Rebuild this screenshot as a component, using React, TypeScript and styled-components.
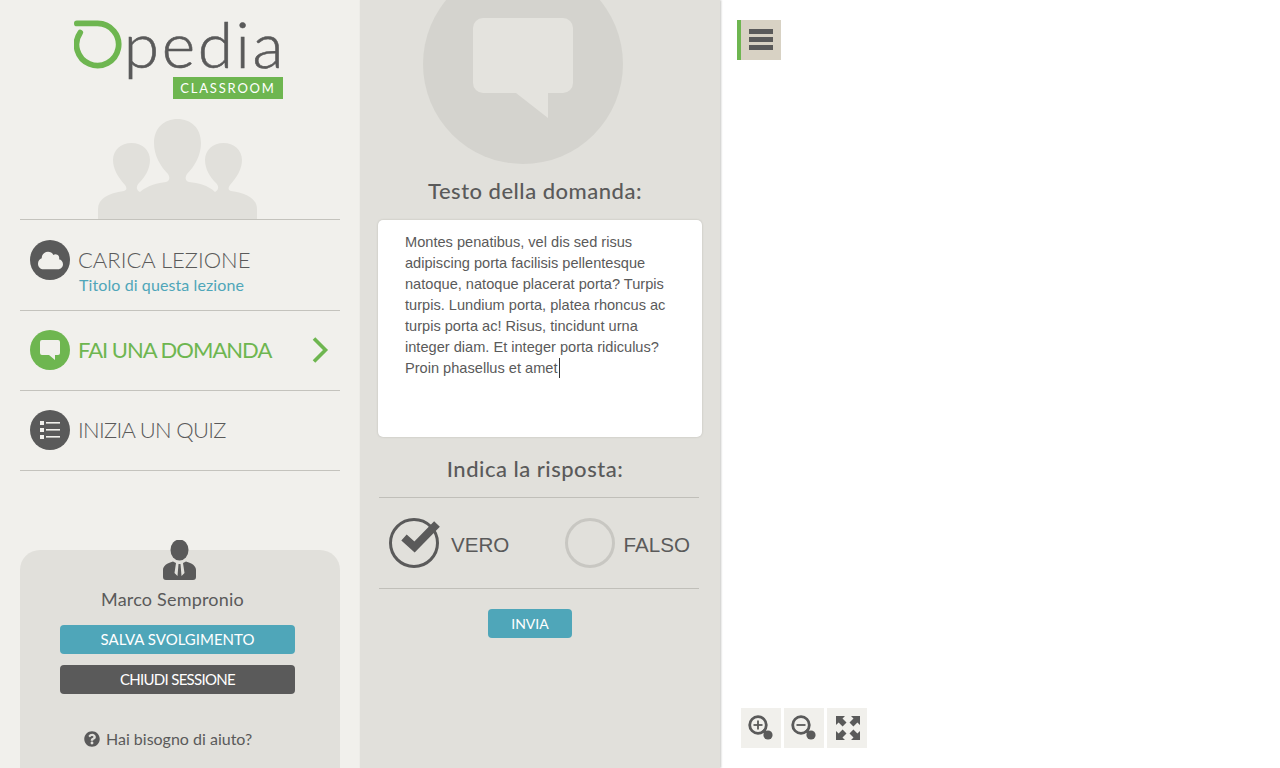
import React from "react";
import styled, { createGlobalStyle } from "styled-components";
import { FaCloud, FaQuestionCircle } from "react-icons/fa";

const GlobalStyle = createGlobalStyle`
  html, body {
    margin: 0;
    height: 100%;
    overflow: hidden;
    font-family: "Lato", "Open Sans", sans-serif;
    color: #5a5a5a;
  }
  #root { height: 100%; }
  * { box-sizing: border-box; }
`;

const Page = styled.div`
  display: flex;
  width: 1280px;
  height: 768px;
  overflow: hidden;
`;

const Sidebar = styled.aside`
  width: 360px;
  padding: 0 20px;
  background: #f1f0ec;
  display: flex;
  flex-direction: column;
`;

const LogoBlock = styled.div`
  width: 212px;
  height: 119px;
  padding-top: 19px;
  align-self: center;
  display: flex;
  flex-direction: column;
`;

const LogoTop = styled.div`
  display: flex;
  height: 58px;
`;

const LogoName = styled.span`
  font-size: 64px;
  font-weight: 300;
  line-height: 58px;
  letter-spacing: 2.6px;
  margin: -4px 0 0 1px;
  color: #5a5a5a;
  -webkit-text-stroke: 0.6px #5a5a5a;
`;

const LogoTag = styled.div`
  align-self: flex-end;
  width: 110px;
  height: 22px;
  background: #6eb650;
  color: #fff;
  font-size: 13px;
  font-weight: 400;
  line-height: 22px;
  letter-spacing: 1.8px;
  text-align: center;
  margin-right: 3px;
`;

const PeopleArt = styled.svg`
  display: block;
  width: 159px;
  height: 100px;
  flex: none;
  margin-left: 78px;
  fill: #e1e0db;
`;

const Menu = styled.nav`
  border-top: 1px solid #c4c3bd;
  display: flex;
  flex-direction: column;
`;

const MenuRow = styled.div<{ $tall?: boolean }>`
  height: ${(p) => (p.$tall ? 91 : 80)}px;
  border-bottom: 1px solid #c4c3bd;
  padding: ${(p) => (p.$tall ? 20 : 19)}px 11px 0 10px;
  display: flex;
  gap: 8px;
`;

const MenuIcon = styled.div<{ $active?: boolean }>`
  width: 40px;
  height: 40px;
  flex: none;
  border-radius: 50%;
  background: ${(p) => (p.$active ? "#6eb650" : "#5a5a5a")};
  color: #f1f0ec;
  display: flex;
  align-items: center;
  justify-content: center;
`;

const MenuText = styled.div`
  flex: 1;
  display: flex;
  flex-direction: column;
`;

const MenuLabel = styled.div<{ $active?: boolean; $tight?: number }>`
  height: 40px;
  font-size: 22px;
  line-height: 40px;
  font-weight: ${(p) => (p.$active ? 400 : 300)};
  letter-spacing: ${(p) => p.$tight ?? 0}px;
  color: ${(p) => (p.$active ? "#6eb650" : "#5a5a5a")};
  white-space: nowrap;
`;

const MenuSub = styled.div`
  font-size: 16px;
  line-height: 16px;
  margin: -3px 0 0 1px;
  color: #4fa6b9;
  letter-spacing: 0.1px;
`;

const UserCard = styled.section`
  flex: 1;
  margin-top: 79px;
  background: #e1e0db;
  border-radius: 20px 20px 0 0;
  display: flex;
  flex-direction: column;
  align-items: flex-start;
`;

const UserIcon = styled.svg`
  width: 33px;
  height: 40px;
  margin: -10px 0 0 143px;
  fill: #5a5a5a;
`;

const UserName = styled.div`
  width: 305px;
  margin-top: 8px;
  text-align: center;
  font-size: 18px;
  line-height: 22px;
  letter-spacing: 0.2px;
`;

const SideButton = styled.button<{ $dark?: boolean }>`
  width: 235px;
  height: 29px;
  margin: ${(p) => (p.$dark ? 11 : 15)}px 0 0 40px;
  padding: 0;
  border: 0;
  border-radius: 4px;
  background: ${(p) => (p.$dark ? "#5a5a5a" : "#4fa6b9")};
  color: #fff;
  font-family: inherit;
  font-size: 15px;
  letter-spacing: ${(p) => (p.$dark ? -0.7 : 0)}px;
  line-height: 29px;
  text-align: center;
`;

const HelpLine = styled.div`
  margin: 35px 0 0 64px;
  display: flex;
  align-items: center;
  gap: 6px;
  font-size: 16px;
  line-height: 20px;
  font-weight: 400;
  letter-spacing: 0;
  svg { color: #5a5a5a; }
`;

const QuestionPanel = styled.main`
  width: 360px;
  padding: 0 18px;
  background: #e1e0db;
  display: flex;
  flex-direction: column;
  align-items: center;
  box-shadow: 1px 0 2px rgba(90, 90, 80, 0.35);
  position: relative;
  z-index: 1;
`;

const BubbleDisc = styled.div`
  width: 200px;
  height: 200px;
  flex: none;
  margin: -36px 0 0 -34px;
  border-radius: 50%;
  background: #d4d3ce;
  display: flex;
  align-items: flex-start;
  justify-content: center;
  padding-top: 54px;
`;

const PanelTitle = styled.h2<{ $gap: number }>`
  margin: ${(p) => p.$gap}px 0 0 0;
  padding-right: 10px;
  font-size: 22px;
  line-height: 28px;
  font-weight: 500;
  letter-spacing: 0.5px;
  color: #5a5a5a;
`;

const AnswerBox = styled.div`
  width: 324px;
  height: 217px;
  flex: none;
  margin-top: 15px;
  padding: 12px 30px 0 27px;
  border-radius: 5px;
  background: #fff;
  box-shadow: 0 0 2px rgba(90, 90, 80, 0.3);
  font-family: "Liberation Sans", Arial, sans-serif;
  font-size: 14.6px;
  line-height: 21px;
  color: #5a5a5a;
`;

const Caret = styled.span`
  display: inline-block;
  width: 1px;
  height: 20px;
  margin-left: 1px;
  background: #333;
  vertical-align: -5px;
`;

const TrueFalse = styled.div`
  width: 320px;
  height: 92px;
  flex: none;
  margin: 14px 0 0 -2px;
  border-top: 1px solid #c0bfb9;
  border-bottom: 1px solid #c0bfb9;
  padding: 0 9px 0 10px;
  display: flex;
  align-items: center;
  justify-content: space-between;
`;

const Choice = styled.div<{ $gap: number }>`
  display: flex;
  align-items: center;
  gap: ${(p) => p.$gap}px;
  font-family: "Liberation Sans", Arial, sans-serif;
  font-size: 20.6px;
  color: #5a5a5a;
`;

const ChoiceLabel = styled.span`
  padding-top: 4px;
`;

const RadioRing = styled.span`
  width: 50px;
  height: 50px;
  border: 3px solid #c8c7c2;
  border-radius: 50%;
`;

const SendButton = styled.button`
  width: 84px;
  height: 29px;
  flex: none;
  margin: 20px 0 0 -20px;
  padding: 0;
  border: 0;
  border-radius: 4px;
  background: #4fa6b9;
  color: #fff;
  font-family: inherit;
  font-size: 14px;
  line-height: 29px;
`;

const Viewer = styled.section`
  flex: 1;
  background: #fff;
  padding: 20px 16px 20px 17px;
  display: flex;
  flex-direction: column;
  justify-content: space-between;
`;

const MenuToggle = styled.button`
  width: 44px;
  height: 40px;
  padding: 9px 8px 0 8px;
  border: 0;
  border-left: 4px solid #6eb650;
  background: #d8d2c4;
  display: flex;
  flex-direction: column;
  gap: 3px;
`;

const ToggleBar = styled.span`
  display: block;
  width: 24px;
  height: 5px;
  background: #5a5a5a;
`;

const ZoomTools = styled.div`
  display: flex;
  gap: 3px;
  margin-left: 4px;
`;

const ZoomButton = styled.button`
  width: 40px;
  height: 40px;
  padding: 0;
  border: 0;
  background: #f1f0ec;
  display: flex;
  align-items: center;
  justify-content: center;
`;

const people = (
  <>
    <path d="M0 100V90C0 80 10 74 26 72C29 71 29 69 27 66C20 58 15 50 15 41C15 31 23 24 33.5 24C44 24 52 31 52 41C52 50 47 58 41 64C38 67 38 71 42 73L46 100Z" />
  </>
);

function ListIcon() {
  return (
    <svg width="20" height="20" viewBox="0 0 20 20" fill="#f1f0ec">
      <rect x="0" y="1" width="4" height="4" />
      <rect x="0" y="8" width="4" height="4" />
      <rect x="0" y="15" width="4" height="4" />
      <rect x="6" y="2" width="14" height="1.6" />
      <rect x="6" y="9" width="14" height="1.6" />
      <rect x="6" y="16" width="14" height="1.6" />
    </svg>
  );
}

function Magnifier({ plus }: { plus?: boolean }) {
  return (
    <svg width="26" height="26" viewBox="0 0 26 26" fill="none" stroke="#5a5a5a">
      <circle cx="10" cy="10" r="8.3" strokeWidth="2.8" />
      <path d="M5.5 10H14.5" strokeWidth="1.8" />
      {plus && <path d="M10 5.5V14.5" strokeWidth="1.8" />}
      <path d="M15 15L19 19" strokeWidth="3.5" />
      <circle cx="20" cy="20" r="4.6" fill="#5a5a5a" stroke="none" />
    </svg>
  );
}

function ExpandIcon() {
  return (
    <svg width="26" height="24" viewBox="-2 0 26 24" fill="#5a5a5a">
      <path d="M0 0H9L6.5 2.6L10.5 6.6L6.6 10.5L2.6 6.5L0 9Z" />
      <path d="M24 0V9L21.4 6.5L17.4 10.5L13.5 6.6L17.5 2.6L15 0Z" />
      <path d="M0 24V15L2.6 17.5L6.6 13.5L10.5 17.4L6.5 21.4L9 24Z" />
      <path d="M24 24H15L17.5 21.4L13.5 17.4L17.4 13.5L21.4 17.5L24 15Z" />
    </svg>
  );
}

export default function App() {
  return (
    <Page>
      <GlobalStyle />
      <Sidebar>
        <LogoBlock>
          <LogoTop>
            <svg width="51" height="52" viewBox="0 0 51 52" fill="none">
              <path
                d="M3 3.5H24.5A22 22 0 1 1 6.5 13"
                stroke="#6eb650"
                strokeWidth="6"
                strokeLinecap="round"
              />
            </svg>
            <LogoName>pedia</LogoName>
          </LogoTop>
          <LogoTag>CLASSROOM</LogoTag>
        </LogoBlock>
        <PeopleArt viewBox="0 0 159 100">
          {people}
          <g transform="matrix(-1 0 0 1 159 0)">{people}</g>
          <path d="M42 73C50 66 60 64 68 63C72 62 72 58 70 55C62 47 56 36 56 24C56 9 66 0 79.5 0C93 0 103 9 103 24C103 36 97 47 89 55C87 58 87 62 91 63C100 64 110 66 117 73V100H42Z" />
        </PeopleArt>
        <Menu>
          <MenuRow $tall>
            <MenuIcon>
              <FaCloud size={25} />
            </MenuIcon>
            <MenuText>
              <MenuLabel>CARICA LEZIONE</MenuLabel>
              <MenuSub>Titolo di questa lezione</MenuSub>
            </MenuText>
          </MenuRow>
          <MenuRow>
            <MenuIcon $active>
              <svg width="20" height="20" viewBox="0 0 20 20" fill="#f1f0ec">
                <path d="M2 0H18A2 2 0 0 1 20 2V13A2 2 0 0 1 18 15H15V20L9 15H2A2 2 0 0 1 0 13V2A2 2 0 0 1 2 0Z" />
              </svg>
            </MenuIcon>
            <MenuText>
              <MenuLabel $active $tight={-1}>FAI UNA DOMANDA</MenuLabel>
            </MenuText>
            <svg width="18" height="40" viewBox="0 0 18 40" fill="none">
              <path d="M3 8.5L14.5 20L3 31.5" stroke="#6eb650" strokeWidth="3.6" />
            </svg>
          </MenuRow>
          <MenuRow>
            <MenuIcon>
              <ListIcon />
            </MenuIcon>
            <MenuText>
              <MenuLabel $tight={-0.7}>INIZIA UN QUIZ</MenuLabel>
            </MenuText>
          </MenuRow>
        </Menu>
        <UserCard>
          <UserIcon viewBox="0 0 33 40">
            <ellipse cx="16.5" cy="10" rx="9" ry="10.5" />
            <path d="M10 21.5L13 23L11.5 33L14.5 36L15.5 24H17.5L18.5 36L21.5 33L20 23L23 21.5C29 23 33 26 33 30V37A3 3 0 0 1 30 40H3A3 3 0 0 1 0 37V30C0 26 4 23 10 21.5Z" />
          </UserIcon>
          <UserName>Marco Sempronio</UserName>
          <SideButton>SALVA SVOLGIMENTO</SideButton>
          <SideButton $dark>CHIUDI SESSIONE</SideButton>
          <HelpLine>
            <FaQuestionCircle size={16} />
            Hai bisogno di aiuto?
          </HelpLine>
        </UserCard>
      </Sidebar>

      <QuestionPanel>
        <BubbleDisc>
          <svg width="100" height="100" viewBox="0 0 100 100" fill="#e4e3de">
            <path d="M10 0H90A10 10 0 0 1 100 10V65A10 10 0 0 1 90 75H75V100L43 75H10A10 10 0 0 1 0 65V10A10 10 0 0 1 10 0Z" />
          </svg>
        </BubbleDisc>
        <PanelTitle $gap={13}>Testo della domanda:</PanelTitle>
        <AnswerBox>
          Montes penatibus, vel dis sed risus adipiscing porta facilisis
          pellentesque natoque, natoque placerat porta? Turpis turpis. Lundium
          porta, platea rhoncus ac turpis porta ac! Risus, tincidunt urna
          integer diam. Et integer porta ridiculus? Proin phasellus et amet
          <Caret />
        </AnswerBox>
        <PanelTitle $gap={18}>Indica la risposta:</PanelTitle>
        <TrueFalse>
          <Choice $gap={10}>
            <svg width="52" height="52" viewBox="0 0 52 52" fill="none" stroke="#5a5a5a">
              <circle cx="25" cy="26" r="23.5" strokeWidth="3" />
              <path d="M15 20.5L25.5 30L48 7" strokeWidth="8" />
            </svg>
            <ChoiceLabel>VERO</ChoiceLabel>
          </Choice>
          <Choice $gap={9}>
            <RadioRing />
            <ChoiceLabel>FALSO</ChoiceLabel>
          </Choice>
        </TrueFalse>
        <SendButton>INVIA</SendButton>
      </QuestionPanel>

      <Viewer>
        <MenuToggle aria-label="menu">
          <ToggleBar />
          <ToggleBar />
          <ToggleBar />
        </MenuToggle>
        <ZoomTools>
          <ZoomButton aria-label="zoom in">
            <Magnifier plus />
          </ZoomButton>
          <ZoomButton aria-label="zoom out">
            <Magnifier />
          </ZoomButton>
          <ZoomButton aria-label="fit">
            <ExpandIcon />
          </ZoomButton>
        </ZoomTools>
      </Viewer>
    </Page>
  );
}
